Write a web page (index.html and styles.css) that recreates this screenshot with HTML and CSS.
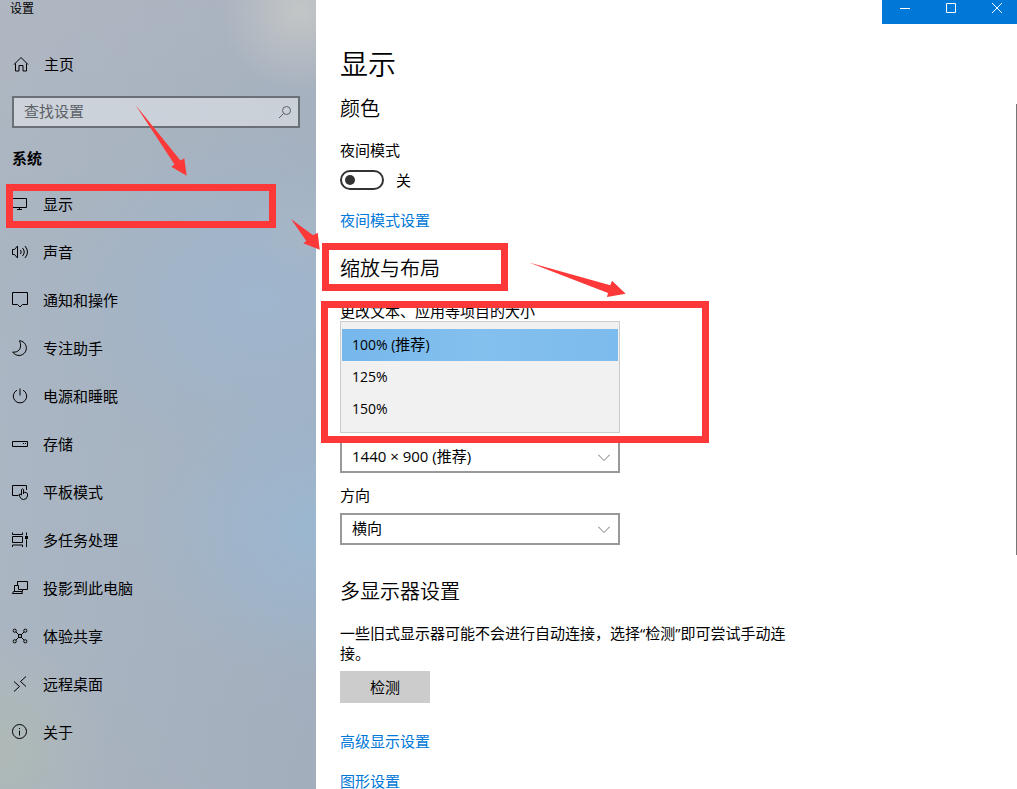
FILE: index.html
```html
<!DOCTYPE html>
<html lang="zh-CN">
<head>
  <meta charset="UTF-8">
  <meta name="viewport" content="width=device-width, initial-scale=1.0">
  <title>设置</title>
  <link rel="stylesheet" href="styles.css">
</head>
<body>
  <aside class="sidebar">
    <div class="app-title">设置</div>
    <a class="nav-item home" href="#">
      <svg class="icon" viewBox="0 0 16 16"><path d="M1 8.500 8 1.500l7 7M2.500 7.500v7.500h3.500v-5.500h4V15h3.500V7.500"/></svg>
      主页
    </a>
    <div class="search">
      <input type="text" id="search" placeholder="查找设置" aria-label="查找设置">
      <svg class="search-icon" viewBox="0 0 14 14"><circle cx="8.500" cy="5.500" r="4"/><path d="M5.500 8.500 1 13"/></svg>
    </div>
    <h3>系统</h3>
    <nav>
      <a class="nav-item" href="#">
        <svg class="icon" viewBox="0 0 16 16"><path d="M.5 2.500h14v9H.5zM7.500 11.500v2M5 13.500h5"/></svg>
        显示
      </a>
      <a class="nav-item" href="#">
        <svg class="icon" viewBox="0 0 16 16"><path d="M.5 5.500h2l3-3.500v12L2.500 10.500h-2zM8.500 6q1.500 2 0 4M10.500 4q3.500 4 0 8M13 2q5 6 0 12"/></svg>
        声音
      </a>
      <a class="nav-item" href="#">
        <svg class="icon" viewBox="0 0 16 16"><path d="M.5 .5h15v12h-5l-2.500 2.500-2.500-2.500h-5z"/></svg>
        通知和操作
      </a>
      <a class="nav-item" href="#">
        <svg class="icon" viewBox="0 0 16 16"><path d="M7.500.7A7.400 7.400 0 1 1 .7 12C5.500 13 11 9 7.500.7z"/></svg>
        专注助手
      </a>
      <a class="nav-item" href="#">
        <svg class="icon" viewBox="0 0 16 16"><path d="M8 .5v7M5 2.200a6.700 6.700 0 1 0 6 0"/></svg>
        电源和睡眠
      </a>
      <a class="nav-item" href="#">
        <svg class="icon" viewBox="0 0 16 16"><path d="M.5 5.500h15v5H.5zM11 7.500h1M13 7.500h1"/></svg>
        存储
      </a>
      <a class="nav-item" href="#">
        <svg class="icon" viewBox="0 0 16 16"><path d="M6.500 11.500h-6V1.500h14V6M9.500 11V5.500q1-1.500 2 0V8l3 .7q1 .3 1 1.300v2q-.5 3.500-4 3.500-2.500 0-3.500-2.500l-1-2.500q1-1 2.500.5M11.500 8v2"/></svg>
        平板模式
      </a>
      <a class="nav-item" href="#">
        <svg class="icon" viewBox="0 0 16 16"><path d="M.5.5v2h10v-2M.5 15v-2h10v2M.5 4.500h10v6H.5zM14.500.5v3M14.500 7.500V15"/><rect class="fill" x="13" y="4" width="3" height="3"/></svg>
        多任务处理
      </a>
      <a class="nav-item" href="#">
        <svg class="icon" viewBox="0 0 16 16"><path d="M5.500 5.500v-4h10v8h-5M2.500 11.500v-6h4v4h4v2zM.5 13.500l1-2h8l1 2z"/></svg>
        投影到此电脑
      </a>
      <a class="nav-item" href="#">
        <svg class="icon" viewBox="0 0 16 16"><circle cx="2.700" cy="2.700" r="1.600"/><circle cx="13.300" cy="2.700" r="1.600"/><circle cx="2.700" cy="13.300" r="1.600"/><circle cx="13.300" cy="13.300" r="1.600"/><circle cx="8" cy="8" r="1.600"/><path d="M4 4l3 3M12 4 9 7M4 12l3-3M12 12 9 9"/></svg>
        体验共享
      </a>
      <a class="nav-item" href="#">
        <svg class="icon" viewBox="0 0 16 16"><path d="M2 5.500 7.500 10.500 2 15.500M14 .5 8.500 5.500l5.500 5"/></svg>
        远程桌面
      </a>
      <a class="nav-item" href="#">
        <svg class="icon" viewBox="0 0 16 16"><circle cx="7.500" cy="7.500" r="7"/><path d="M7.500 6.500v5M7.500 4v1"/></svg>
        关于
      </a>
    </nav>
  </aside>

  <main>
    <div class="window-buttons">
      <button aria-label="最小化"><svg viewBox="0 0 10 10"><path d="M0 5.500h10"/></svg></button>
      <button aria-label="最大化"><svg viewBox="0 0 10 10"><path d="M.5.5h9v9h-9z"/></svg></button>
      <button aria-label="关闭"><svg viewBox="0 0 10 10"><path d="M0 0l10 10M10 0 0 10"/></svg></button>
    </div>
    <div class="content">
      <h1>显示</h1>
      <h2 class="first">颜色</h2>
      <label class="field-label" for="nightLight">夜间模式</label>
      <div class="toggle-row">
        <input type="checkbox" class="toggle" id="nightLight">
        <span>关</span>
      </div>
      <a class="link" href="#">夜间模式设置</a>

      <h2>缩放与布局</h2>
      <div class="scale-label" id="scaleLabel">更改文本、应用等项目的大小</div>
      <ul class="options" role="listbox" aria-labelledby="scaleLabel">
        <li class="selected" role="option" aria-selected="true"><span class="num">100% (</span>推荐<span class="num">)</span></li>
        <li role="option"><span class="num">125%</span></li>
        <li role="option"><span class="num">150%</span></li>
      </ul>
      <div class="select">
        <select id="resolution" aria-label="分辨率">
          <option>1440 × 900 (推荐)</option>
        </select>
        <svg viewBox="0 0 12 7"><path d="M0 .5l6 6 6-6"/></svg>
      </div>
      <label class="direction-label" for="direction">方向</label>
      <div class="select">
        <select id="direction">
          <option>横向</option>
        </select>
        <svg viewBox="0 0 12 7"><path d="M0 .5l6 6 6-6"/></svg>
      </div>

      <h2 class="multi">多显示器设置</h2>
      <p>一些旧式显示器可能不会进行自动连接，选择“检测”即可尝试手动连接。</p>
      <button class="detect-button">检测</button>
      <div class="links">
        <a class="link" href="#">高级显示设置</a>
        <a class="link" href="#">图形设置</a>
      </div>
    </div>
    <div class="scrollbar"></div>
  </main>

  <!-- red guide boxes and arrows -->
  <svg class="marks" width="720" height="450" viewBox="0 0 720 450">
    <rect x="9.500" y="187.500" width="263" height="37"/>
    <rect x="325.500" y="246.500" width="179" height="41"/>
    <rect x="324.500" y="304.500" width="381" height="135"/>
    <path d="M135.500 105 180.500 160.500 184.300 158.300 186.700 175.700 171.300 166.700 174.500 164.500z"/>
    <path d="M291 219 313 235.300 317.700 232.700 319.700 249.700 303.300 243.300 306.300 241z"/>
    <path d="M529 262.500 610.300 285.300 612 280.700 625.700 293.700 607 297 608 293z"/>
  </svg>
</body>
</html>
```

FILE: styles.css
```css
* {
  box-sizing: border-box;
}

body {
  display: flex;
  height: 100vh;
  margin: 0;
  overflow: hidden;
  font-family: "Open Sans", "Noto Sans CJK SC", sans-serif;
  font-size: 15px;
  line-height: 20px;
  color: #000;
  background: #fff;
}

h1, h2, h3, p, ul {
  margin: 0;
  padding: 0;
}

a {
  text-decoration: none;
}

input, select, button {
  font: inherit;
  color: inherit;
  border-radius: 0;
}

svg {
  fill: none;
  stroke: #000;
}

/* sidebar */
.sidebar {
  flex: none;
  width: 316px;
  background:
    radial-gradient(circle at 300px 10px, rgba(198, 200, 199, 0.9), rgba(198, 200, 199, 0) 80px),
    radial-gradient(circle at 310px 225px, rgba(170, 184, 198, 0.6), rgba(170, 184, 198, 0) 60px),
    radial-gradient(ellipse 180px 150px at 320px 530px, #9bb7d1, rgba(155, 183, 209, 0)),
    radial-gradient(ellipse 200px 170px at 260px 300px, #9fb6ce, rgba(159, 182, 206, 0)),
    radial-gradient(circle at 0 750px, #aeb9b6, rgba(174, 185, 182, 0) 110px),
    linear-gradient(to right, rgba(174, 184, 195, 0.6), rgba(158, 173, 190, 0.4)),
    linear-gradient(#b0b5bf, #a3b1c0 35%, #a5b3c3 65%, #a6aebb);
}

.app-title {
  height: 40px;
  padding-left: 10px;
  font-size: 12px;
  line-height: 17px;
}

.nav-item {
  display: flex;
  align-items: center;
  gap: 15px;
  height: 48px;
  padding-left: 12px;
  color: #000;
}

.icon {
  width: 16px;
  height: 16px;
}

.icon .fill {
  fill: #000;
  stroke: none;
}

.home {
  padding-left: 13px;
}

.search {
  position: relative;
  margin: 8px 16px 20px 12px;
}

.search input {
  display: block;
  width: 100%;
  height: 32px;
  padding: 0 40px 2px 10px;
  border: 2px solid #6b7077;
  background: rgba(255, 255, 255, 0.4);
  outline: none;
}

.search input::placeholder {
  color: #5c6067;
  opacity: 1;
}

.search-icon {
  position: absolute;
  top: 9px;
  right: 8px;
  width: 14px;
  height: 14px;
  stroke: #5c6067;
}

h3 {
  margin: 0 0 12px 12px;
  font-size: 15px;
  font-weight: bold;
}

/* main area */
main {
  position: relative;
  flex: 1;
}

.window-buttons {
  display: flex;
  width: 135px;
  height: 24px;
  margin-left: auto;
  overflow: hidden;
  background: #0078d7;
}

.window-buttons button {
  display: flex;
  flex: none;
  justify-content: center;
  width: 46px;
  padding: 3px 0;
  border: none;
  background: none;
}

.window-buttons svg {
  width: 10px;
  height: 10px;
  stroke: #fff;
}

.content {
  padding: 22px 24px 0;
}

h1 {
  font-size: 28px;
  font-weight: 350;
  line-height: 36px;
}

h2 {
  margin-top: 24px;
  font-size: 20px;
  font-weight: 350;
  line-height: 30px;
}

h2.first {
  margin-top: 12px;
}

h2.multi {
  margin-top: 32px;
}

.field-label {
  display: block;
  margin: 16px 0 10px;
}

.toggle-row {
  display: flex;
  align-items: center;
  gap: 12px;
  margin-bottom: 20px;
}

.toggle {
  appearance: none;
  width: 44px;
  height: 20px;
  margin: 0;
  padding: 3px;
  border: 2px solid #333;
  border-radius: 10px;
}

.toggle::before {
  content: "";
  display: block;
  width: 10px;
  height: 10px;
  border-radius: 50%;
  background: #333;
}

.toggle:checked::before {
  margin-left: auto;
}

.link {
  display: block;
  width: fit-content;
  color: #0078d7;
}

.link:hover {
  color: #666;
}

.scale-label {
  margin-top: 17px;
}

.options {
  width: 280px;
  margin-bottom: 8px;
  padding: 7px 1px;
  border: 1px solid #ccc;
  background: #f1f1f1;
  list-style: none;
}

.options li {
  height: 32px;
  padding: 0 10px;
  line-height: 30px;
}

.options .selected {
  background: linear-gradient(to right, #76b7ec, #84c0ee 50%, #7cbbed);
}

.num {
  font-size: 14px;
}

.select {
  position: relative;
  width: 280px;
}

.select select {
  appearance: none;
  display: block;
  width: 100%;
  height: 32px;
  padding: 0 30px 2px 10px;
  border: 2px solid #999;
  background: #fff;
}

.select svg {
  position: absolute;
  top: 13px;
  right: 10px;
  width: 12px;
  height: 7px;
  stroke: #777;
}

.direction-label {
  display: block;
  margin: 12px 0 8px;
}

p {
  max-width: 455px;
}

.content p {
  margin: 16px 0 8px;
}

.detect-button {
  display: block;
  width: 90px;
  height: 32px;
  padding: 0;
  border: none;
  background: #ccc;
}

.links {
  display: grid;
  gap: 20px;
  margin-top: 28px;
}

.scrollbar {
  position: absolute;
  top: 104px;
  right: 0;
  width: 1px;
  height: 451px;
  background: #767676;
}

.marks {
  position: absolute;
  top: 0;
  left: 0;
  pointer-events: none;
}

.marks rect {
  stroke: #fd3838;
  stroke-width: 7;
}

.marks path {
  fill: #fd3838;
  stroke: none;
}
```
